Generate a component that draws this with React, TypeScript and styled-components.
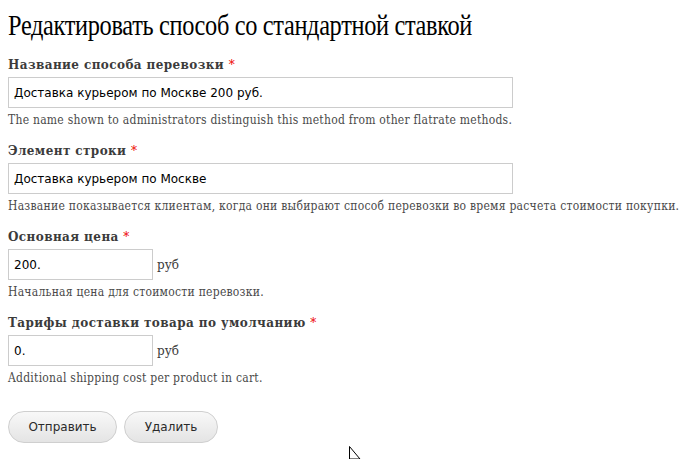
import styled, { createGlobalStyle } from "styled-components";

const GlobalStyle = createGlobalStyle`
  body {
    margin: 0;
    background: #ffffff;
  }
`;

const Page = styled.div`
  position: relative;
  width: 681px;
  height: 459px;
  padding: 0 8px;
  box-sizing: border-box;
  overflow: hidden;
`;

const Title = styled.h1`
  margin: 0;
  padding-top: 7px;
  height: 49px;
  font-family: "Liberation Serif", serif;
  font-weight: normal;
  font-size: 29px;
  line-height: 36px;
  letter-spacing: -0.4px;
  color: #000;
  white-space: nowrap;
  transform: scaleX(0.84);
  transform-origin: left center;
`;

const Field = styled.div`
  margin-bottom: 13px;
`;

const Label = styled.label`
  display: block;
  font-family: "DejaVu Serif", serif;
  font-weight: bold;
  font-size: 12px;
  line-height: 18px;
  letter-spacing: 0.4px;
  color: #3b3b3b;
  margin-bottom: 3px;
  white-space: nowrap;
`;

const Required = styled.span`
  color: #e00;
  font-weight: normal;
`;

const Row = styled.div`
  display: flex;
  align-items: center;
  gap: 4px;
`;

const TextInput = styled.input<{ $w: number }>`
  box-sizing: border-box;
  width: ${(p) => p.$w}px;
  height: 31px;
  border: 1px solid #cccccc;
  padding: 0 5px;
  font-family: "DejaVu Sans", sans-serif;
  font-size: 12px;
  color: #000;
  outline: none;
`;

const Suffix = styled.span`
  font-family: "DejaVu Serif", serif;
  font-size: 12px;
  color: #3b3b3b;
`;

const Description = styled.div`
  margin-top: 3px;
  font-family: "DejaVu Serif", serif;
  font-stretch: condensed;
  font-size: 12px;
  line-height: 18px;
  letter-spacing: 0.25px;
  color: #4a4a4a;
  white-space: nowrap;
`;

const Actions = styled.div`
  display: flex;
  gap: 7px;
  padding-top: 11px;
`;

const Button = styled.button<{ $w: number }>`
  width: ${(p) => p.$w}px;
  height: 32px;
  border: 1px solid #cfcfcf;
  border-radius: 16px;
  background: linear-gradient(#f8f8f8, #e4e4e4);
  font-family: "DejaVu Sans", sans-serif;
  font-size: 12px;
  color: #2a2a2a;
`;

const Cursor = styled.svg`
  position: absolute;
  left: 349px;
  top: 446px;
`;

export default function App() {
  return (
    <Page>
      <GlobalStyle />
      <Title>Редактировать способ со стандартной ставкой</Title>

      <Field>
        <Label>
          Название способа перевозки <Required>*</Required>
        </Label>
        <TextInput $w={505} defaultValue="Доставка курьером по Москве 200 руб." />
        <Description>
          The name shown to administrators distinguish this method from other flatrate methods.
        </Description>
      </Field>

      <Field>
        <Label>
          Элемент строки <Required>*</Required>
        </Label>
        <TextInput $w={505} defaultValue="Доставка курьером по Москве" />
        <Description>
          Название показывается клиентам, когда они выбирают способ перевозки во время расчета стоимости покупки.
        </Description>
      </Field>

      <Field>
        <Label>
          Основная цена <Required>*</Required>
        </Label>
        <Row>
          <TextInput $w={145} defaultValue="200." />
          <Suffix>руб</Suffix>
        </Row>
        <Description>Начальная цена для стоимости перевозки.</Description>
      </Field>

      <Field>
        <Label>
          Тарифы доставки товара по умолчанию <Required>*</Required>
        </Label>
        <Row>
          <TextInput $w={145} defaultValue="0." />
          <Suffix>руб</Suffix>
        </Row>
        <Description>Additional shipping cost per product in cart.</Description>
      </Field>

      <Actions>
        <Button $w={109}>Отправить</Button>
        <Button $w={94}>Удалить</Button>
      </Actions>

      <Cursor width="12" height="14" viewBox="0 0 12 14">
        <path d="M0.5 0.5 L0.5 13 L11 13 Z" fill="#fff" stroke="#000" strokeWidth="1" />
      </Cursor>
    </Page>
  );
}
